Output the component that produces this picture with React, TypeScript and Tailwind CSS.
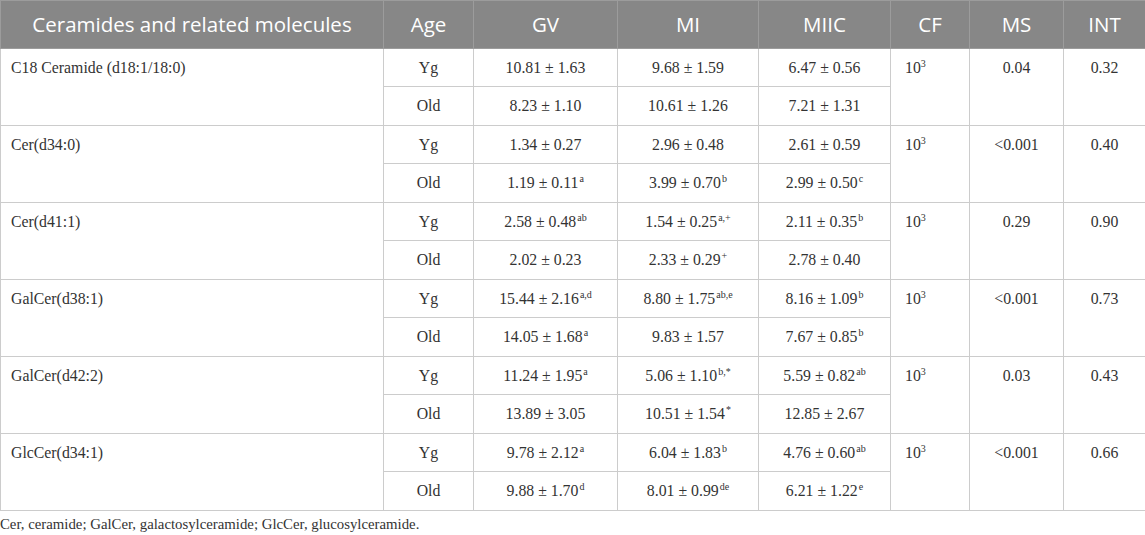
import { Fragment } from 'react';

const serif = { fontFamily: '"Liberation Serif", "Times New Roman", serif' };

type Val = [string, string?];

interface Group {
  name: string;
  yg: [Val, Val, Val];
  old: [Val, Val, Val];
  ms: string;
  int: string;
}

const groups: Group[] = [
  {
    name: 'C18 Ceramide (d18:1/18:0)',
    yg: [['10.81 ± 1.63'], ['9.68 ± 1.59'], ['6.47 ± 0.56']],
    old: [['8.23 ± 1.10'], ['10.61 ± 1.26'], ['7.21 ± 1.31']],
    ms: '0.04',
    int: '0.32',
  },
  {
    name: 'Cer(d34:0)',
    yg: [['1.34 ± 0.27'], ['2.96 ± 0.48'], ['2.61 ± 0.59']],
    old: [['1.19 ± 0.11', 'a'], ['3.99 ± 0.70', 'b'], ['2.99 ± 0.50', 'c']],
    ms: '<0.001',
    int: '0.40',
  },
  {
    name: 'Cer(d41:1)',
    yg: [['2.58 ± 0.48', 'ab'], ['1.54 ± 0.25', 'a,+'], ['2.11 ± 0.35', 'b']],
    old: [['2.02 ± 0.23'], ['2.33 ± 0.29', '+'], ['2.78 ± 0.40']],
    ms: '0.29',
    int: '0.90',
  },
  {
    name: 'GalCer(d38:1)',
    yg: [['15.44 ± 2.16', 'a,d'], ['8.80 ± 1.75', 'ab,e'], ['8.16 ± 1.09', 'b']],
    old: [['14.05 ± 1.68', 'a'], ['9.83 ± 1.57'], ['7.67 ± 0.85', 'b']],
    ms: '<0.001',
    int: '0.73',
  },
  {
    name: 'GalCer(d42:2)',
    yg: [['11.24 ± 1.95', 'a'], ['5.06 ± 1.10', 'b,*'], ['5.59 ± 0.82', 'ab']],
    old: [['13.89 ± 3.05'], ['10.51 ± 1.54', '*'], ['12.85 ± 2.67']],
    ms: '0.03',
    int: '0.43',
  },
  {
    name: 'GlcCer(d34:1)',
    yg: [['9.78 ± 2.12', 'a'], ['6.04 ± 1.83', 'b'], ['4.76 ± 0.60', 'ab']],
    old: [['9.88 ± 1.70', 'd'], ['8.01 ± 0.99', 'de'], ['6.21 ± 1.22', 'e']],
    ms: '<0.001',
    int: '0.66',
  },
];

const headers = ['Ceramides and related molecules', 'Age', 'GV', 'MI', 'MIIC', 'CF', 'MS', 'INT'];
const widths = [383, 90, 144, 141, 132, 79, 94, 82];

const cell = 'border border-[#cccccc] text-center align-middle p-0';
const spanCell = 'border border-[#cccccc] align-top pt-[9px] p-0';
const supCls = 'text-[10px] relative -top-[6px] ml-[1px]';

function Value({ v }: { v: Val }) {
  return (
    <>
      {v[0]}
      {v[1] && <sup className={supCls}>{v[1]}</sup>}
    </>
  );
}

export default function App() {
  return (
    <div className="w-[1145px] h-[535px] bg-white overflow-hidden text-[#333333]">
      <table className="w-full table-fixed border-collapse">
        <colgroup>
          {widths.map((w, i) => (
            <col key={i} style={{ width: w }} />
          ))}
        </colgroup>
        <thead>
          <tr className="h-[48px] bg-[#878787]">
            {headers.map((h) => (
              <th
                key={h}
                className="border border-[#9c9c9c] font-normal text-white text-[20.5px] text-center"
                style={{ fontFamily: '"Open Sans", "Noto Sans", sans-serif' }}
              >
                {h}
              </th>
            ))}
          </tr>
        </thead>
        <tbody className="text-[15.8px] leading-[20px]" style={serif}>
          {groups.map((g) => (
            <Fragment key={g.name}>
              <tr className="h-[38px]">
                <td rowSpan={2} className={`${spanCell} pl-[10px] text-left`}>
                  {g.name}
                </td>
                <td className={cell}>Yg</td>
                {g.yg.map((v, i) => (
                  <td key={i} className={cell}>
                    <Value v={v} />
                  </td>
                ))}
                <td rowSpan={2} className={`${spanCell} pl-[14px] text-left`}>
                  10<sup className="text-[10px] relative -top-[6px]">3</sup>
                </td>
                <td rowSpan={2} className={`${spanCell} text-center`}>
                  {g.ms}
                </td>
                <td rowSpan={2} className={`${spanCell} text-center`}>
                  {g.int}
                </td>
              </tr>
              <tr className="h-[39px]">
                <td className={cell}>Old</td>
                {g.old.map((v, i) => (
                  <td key={i} className={cell}>
                    <Value v={v} />
                  </td>
                ))}
              </tr>
            </Fragment>
          ))}
        </tbody>
      </table>
      <p className="mt-[3px] text-[14.8px] leading-[20px]" style={serif}>
        Cer, ceramide; GalCer, galactosylceramide; GlcCer, glucosylceramide.
      </p>
    </div>
  );
}
